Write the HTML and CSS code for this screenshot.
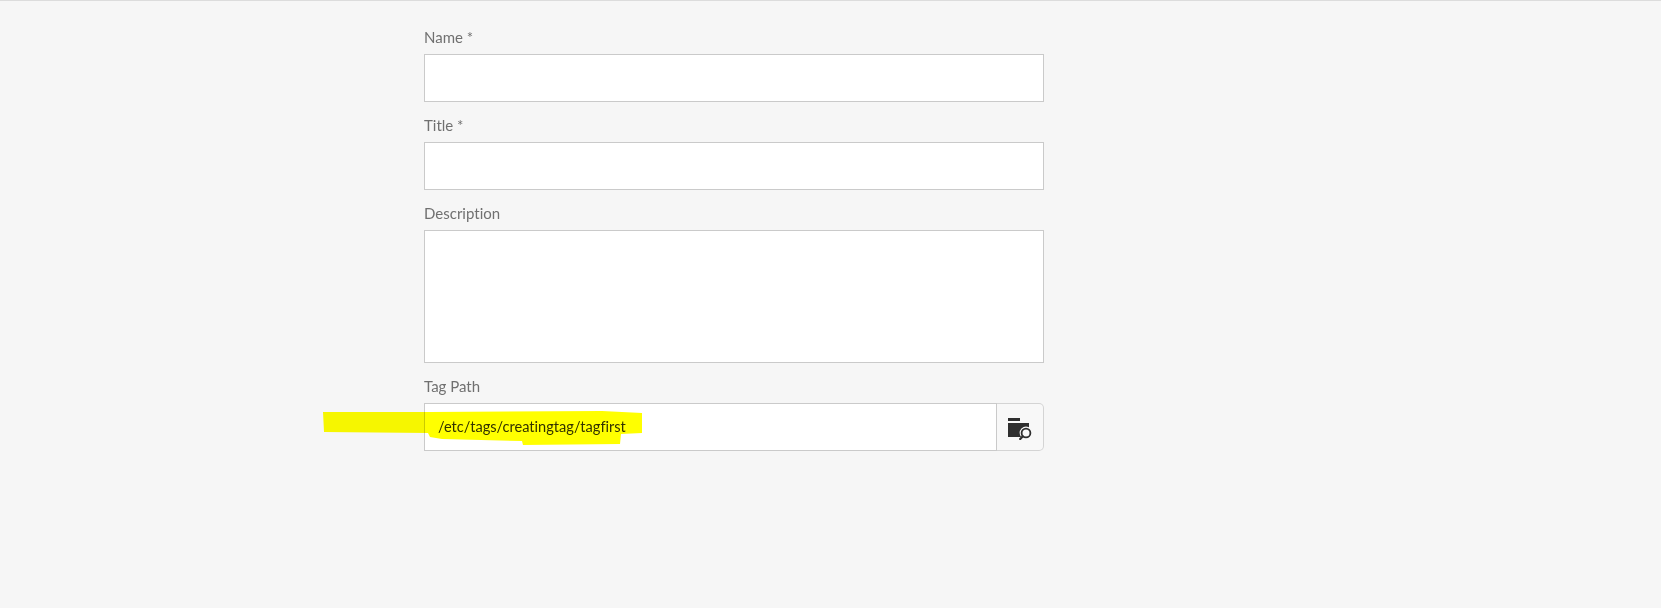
FILE: index.html
```html
<!DOCTYPE html>
<html lang="en">
<head>
<meta charset="utf-8">
<title>Create Tag</title>
<link rel="stylesheet" href="styles.css">
</head>
<body>
<main class="form">
  <div class="field">
    <label class="label">Name *</label>
    <div class="input"></div>
  </div>
  <div class="field">
    <label class="label">Title *</label>
    <div class="input"></div>
  </div>
  <div class="field">
    <label class="label">Description</label>
    <div class="textarea"></div>
  </div>
  <div class="field">
    <label class="label">Tag Path</label>
    <div class="picker">
      <div class="input input-path">/etc/tags/creatingtag/tagfirst</div>
      <button class="browse" type="button" aria-label="Browse">
        <svg class="browse-icon" width="24" height="24" viewBox="0 0 24 24">
          <path class="ink" d="M0 2h12v3H0z"/>
          <path class="ink" d="M0 7h21v14H0z"/>
          <circle class="halo" cx="18" cy="17" r="6.4"/>
          <circle class="lens" cx="18" cy="17" r="4.4"/>
          <path class="handle" d="M14.8 20.2 12.2 23"/>
        </svg>
      </button>
    </div>
  </div>
</main>
<svg class="highlight" width="340" height="40" viewBox="0 0 340 40" aria-hidden="true">
  <path d="M1 2 L108 2 L280 1 L320 3 L320 23 L299 24 L298 34 L201 35 L200 31 L120 29 L108 27 L106 23 L2 22 Z"/>
</svg>
</body>
</html>
```
FILE: styles.css
```css
* {
  box-sizing: border-box;
}

html,
body {
  margin: 0;
  height: 608px;
  overflow: hidden;
}

body {
  position: relative;
  background: #f6f6f6;
  border-top: 1px solid #dcdcdc;
  font-family: "Lato", "Open Sans", sans-serif;
  font-variant-ligatures: none;
}

.form {
  width: 620px;
  margin-left: 424px;
  padding-top: 25px;
  display: flex;
  flex-direction: column;
  gap: 12px;
}

.field {
  display: flex;
  flex-direction: column;
}

.label {
  height: 28px;
  font-size: 15px;
  line-height: 22px;
  color: #707070;
}

.input,
.textarea {
  background: #fff;
  border: 1px solid #cacaca;
}

.input {
  height: 48px;
}

.textarea {
  height: 133px;
}

.picker {
  display: flex;
}

.input-path {
  flex: 1;
  padding-left: 13px;
  font-size: 14.6px;
  line-height: 46px;
  color: #323232;
}

.browse {
  width: 47px;
  height: 48px;
  padding: 1px 0 0;
  display: flex;
  align-items: center;
  justify-content: center;
  background: #f8f8f8;
  border: 1px solid #d4d4d4;
  border-left-width: 0;
  border-radius: 0 5px 5px 0;
}

.ink {
  fill: #2f2f2f;
}

.halo {
  fill: #f8f8f8;
}

.lens {
  fill: #f8f8f8;
  stroke: #2f2f2f;
  stroke-width: 1.8;
}

.handle {
  fill: none;
  stroke: #2f2f2f;
  stroke-width: 2.2;
  stroke-linecap: round;
}

.highlight {
  position: absolute;
  left: 322px;
  top: 409px;
  mix-blend-mode: multiply;
}

.highlight path {
  fill: #ffff00;
}
```
